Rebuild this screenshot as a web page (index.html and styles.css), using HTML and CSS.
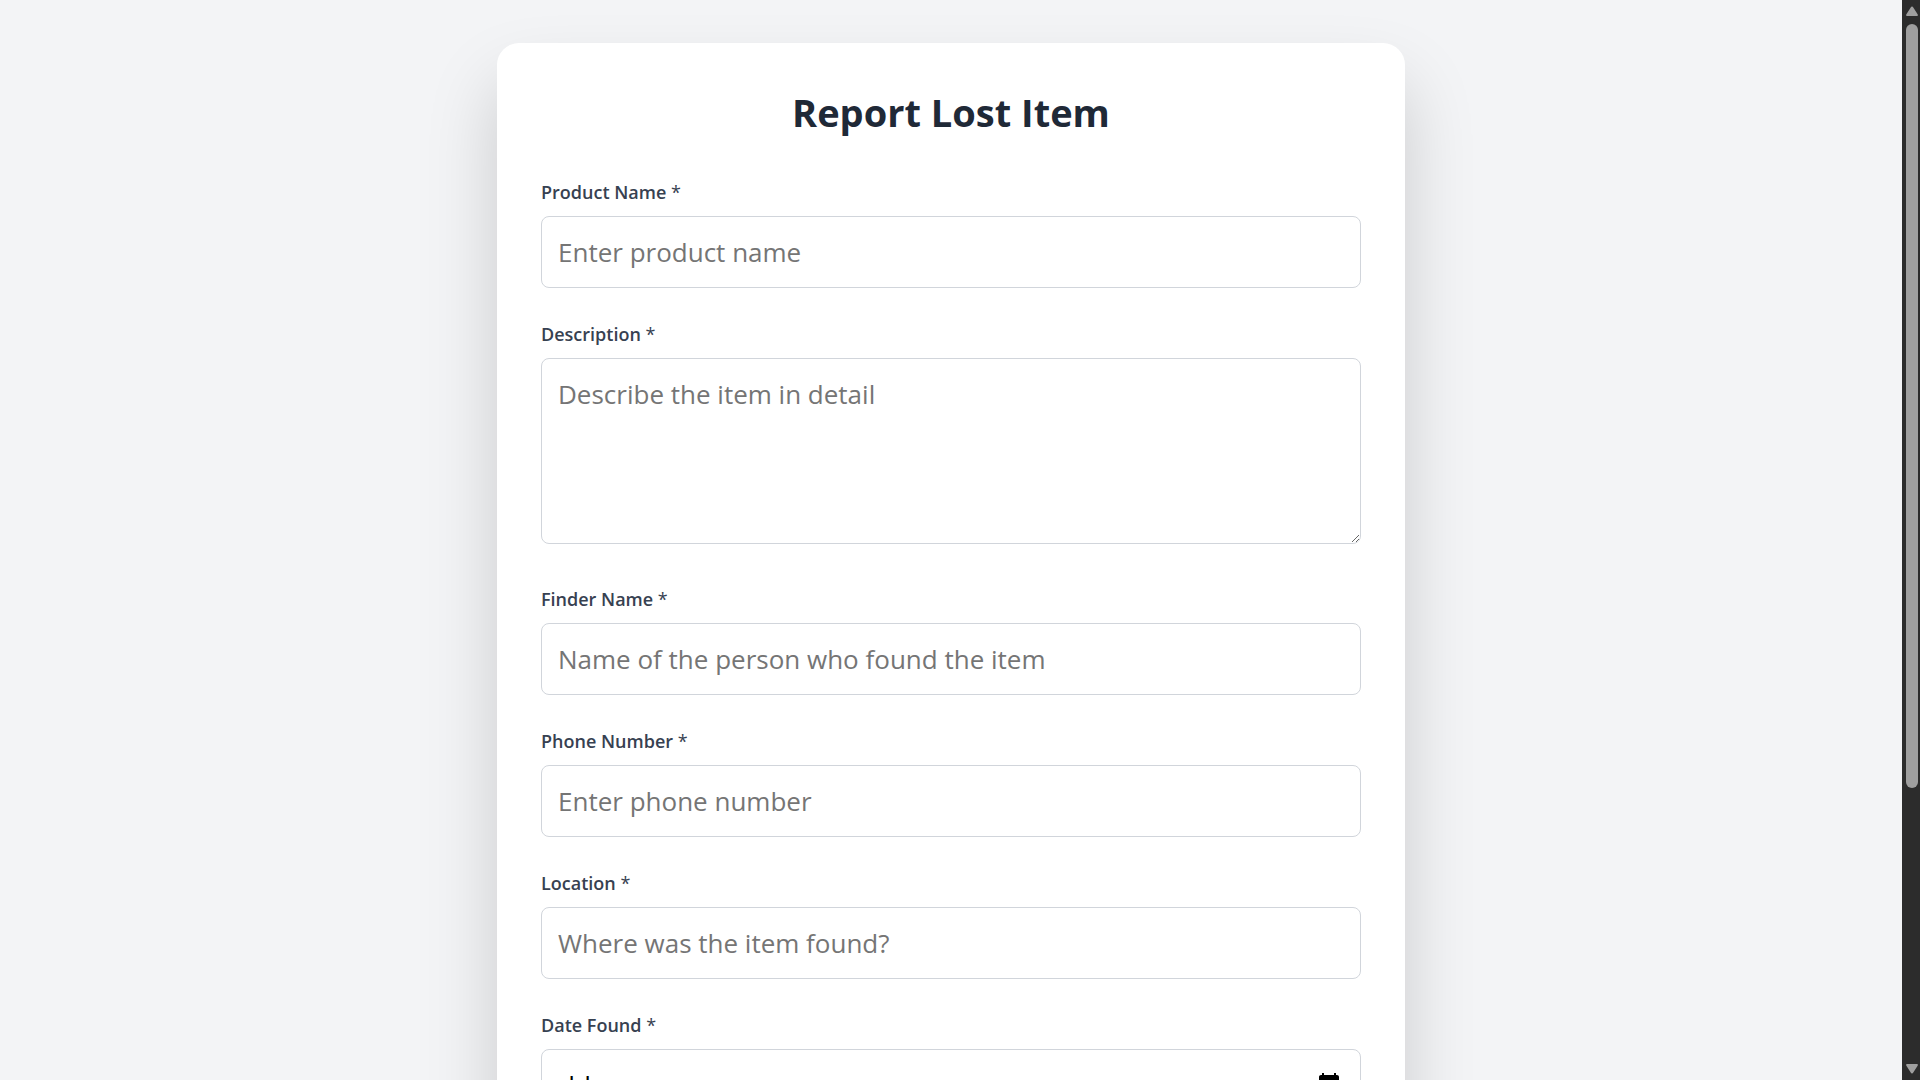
FILE: index.html
```html
<!DOCTYPE html>
<html lang="en">
<head>
<meta charset="utf-8">
<meta name="viewport" content="width=device-width, initial-scale=1">
<title>Report Lost Item</title>
<link rel="stylesheet" href="styles.css">
</head>
<body class="window">
<main class="page">
  <form class="card">
    <h1 class="title">Report Lost Item</h1>
    <div class="field">
      <label class="label" for="product">Product Name <span class="star">*</span></label>
      <input class="control" id="product" type="text" placeholder="Enter product name">
    </div>
    <div class="field field-area">
      <label class="label" for="description">Description <span class="star">*</span></label>
      <textarea class="control area" id="description" placeholder="Describe the item in detail"></textarea>
    </div>
    <div class="field">
      <label class="label" for="finder">Finder Name <span class="star">*</span></label>
      <input class="control" id="finder" type="text" placeholder="Name of the person who found the item">
    </div>
    <div class="field">
      <label class="label" for="phone">Phone Number <span class="star">*</span></label>
      <input class="control" id="phone" type="tel" placeholder="Enter phone number">
    </div>
    <div class="field">
      <label class="label" for="location">Location <span class="star">*</span></label>
      <input class="control" id="location" type="text" placeholder="Where was the item found?">
    </div>
    <div class="field">
      <label class="label" for="date">Date Found <span class="star">*</span></label>
      <input class="control date" id="date" type="date">
    </div>
  </form>
</main>
<div class="scrollbar" aria-hidden="true">
  <svg class="arrow" viewBox="0 0 12 10"><path d="M6 0.5Q6.8 0.5 7.3 1.4L11.6 8.2Q12.4 10 11 10H1Q-0.4 10 0.4 8.2L4.7 1.4Q5.2 0.5 6 0.5Z" fill="#9f9f9f"/></svg>
  <div class="track"><div class="thumb"></div></div>
  <svg class="arrow" viewBox="0 0 12 10"><path d="M6 9.5Q6.8 9.5 7.3 8.6L11.6 1.8Q12.4 0 11 0H1Q-0.4 0 0.4 1.8L4.7 8.6Q5.2 9.5 6 9.5Z" fill="#9f9f9f"/></svg>
</div>
</body>
</html>
```
FILE: styles.css
```css
* {
  box-sizing: border-box;
}

.window {
  display: flex;
  height: 100vh;
  margin: 0;
  background: #f3f4f6;
  font-family: "Segoe UI", "Open Sans", "Noto Sans", sans-serif;
}

.page {
  flex: 1;
  min-width: 0;
  padding: 43px 24px;
  overflow-y: auto;
  scrollbar-width: none;
}

.scrollbar {
  display: flex;
  flex-direction: column;
  gap: 8px;
  width: 18px;
  padding: 6px 2px 6px 4px;
  background: #2c2c2c;
}

.arrow {
  width: 12px;
  height: 10px;
}

.track {
  flex: 1;
  width: 12px;
}

.thumb {
  height: 74%;
  border-radius: 6px;
  background: #9f9f9f;
}

.card {
  max-width: 908px;
  margin: 0 auto;
  padding: 43px 44px;
  border-radius: 22px;
  background: #ffffff;
  box-shadow: 0 40px 70px rgba(0, 0, 0, 0.17);
}

.title {
  margin: 0 0 42px;
  color: #1f2937;
  font-size: 38px;
  font-weight: 700;
  line-height: 52px;
  text-align: center;
}

.field {
  display: flex;
  flex-direction: column;
  gap: 11px;
  margin-bottom: 34px;
}

.field-area {
  margin-bottom: 43px;
}

.label {
  color: #374151;
  font-size: 18px;
  font-weight: 600;
  line-height: 25px;
}

.star {
  font-weight: 400;
}

.control {
  width: 100%;
  height: 72px;
  padding: 16px;
  border: 1px solid #d1d5db;
  border-radius: 8px;
  background: #ffffff;
  color: #000000;
  font-family: inherit;
  font-size: 26px;
  line-height: 38px;
}

.control::placeholder {
  color: #757575;
  opacity: 1;
}

.area {
  display: block;
  height: 186px;
  resize: vertical;
}

/* Day comes before month and year */
.date::-webkit-datetime-edit-fields-wrapper {
  display: flex;
  gap: 8px;
}

.date::-webkit-datetime-edit-text {
  display: none;
}

.date::-webkit-datetime-edit-day-field {
  order: -1;
}

.date::-webkit-calendar-picker-indicator {
  width: 26px;
  height: 26px;
}
```
